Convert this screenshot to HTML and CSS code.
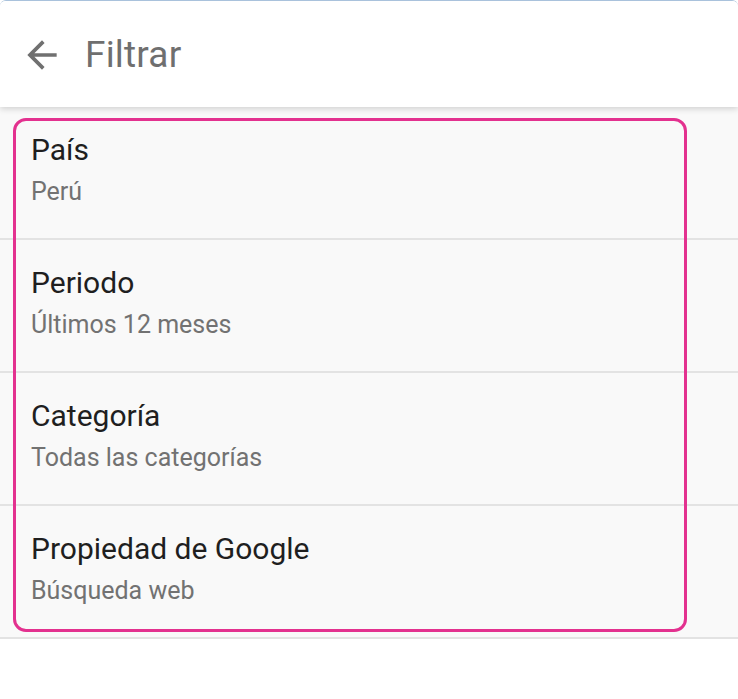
FILE: index.html
```html
<!DOCTYPE html>
<html lang="es">
<head>
<meta charset="utf-8">
<title>Filtrar</title>
<link rel="stylesheet" href="styles.css">
</head>
<body>
<div class="screen">
  <header class="appbar">
    <svg class="back" viewBox="0 0 24 24" aria-hidden="true">
      <path d="M20 11H7.83l5.59-5.59L12 4l-8 8 8 8 1.41-1.41L7.83 13H20v-2z" fill="#707070"/>
    </svg>
    <h1 class="title">Filtrar</h1>
  </header>
  <main class="list">
    <div class="row">
      <div class="row-title">País</div>
      <div class="row-sub">Perú</div>
    </div>
    <div class="row">
      <div class="row-title">Periodo</div>
      <div class="row-sub">Últimos 12 meses</div>
    </div>
    <div class="row">
      <div class="row-title">Categoría</div>
      <div class="row-sub">Todas las categorías</div>
    </div>
    <div class="row">
      <div class="row-title">Propiedad de Google</div>
      <div class="row-sub">Búsqueda web</div>
    </div>
    <div class="highlight"></div>
  </main>
</div>
</body>
</html>
```

FILE: styles.css
```css
* { box-sizing: border-box; }
html, body {
  margin: 0;
  padding: 0;
  background: #ffffff;
  font-family: Roboto, "Noto Sans", Arial, sans-serif;
}
.screen {
  width: 738px;
  height: 699px;
  overflow: hidden;
  background: #ffffff;
  border-top: 1px solid #a9c2dc;
  border-radius: 6px 6px 0 0;
}
.appbar {
  position: relative;
  z-index: 2;
  height: 106px;
  background: #ffffff;
  display: flex;
  align-items: center;
  padding-left: 20px;
  box-shadow: 0 2px 6px rgba(0,0,0,0.16);
}
.back {
  width: 44px;
  height: 44px;
  flex: none;
  margin-top: 2px;
}
.title {
  margin: 0 0 0 21px;
  font-size: 37px;
  font-weight: 400;
  color: #6f6f6f;
  letter-spacing: 0.2px;
}
.list {
  position: relative;
  background: #f9f9f9;
}
.row {
  height: 133px;
  border-bottom: 2px solid #e3e3e3;
  padding: 24px 0 0 31px;
}
.row-title {
  font-size: 30px;
  line-height: 38px;
  color: #1f1f1f;
}
.row-sub {
  margin-top: 7px;
  font-size: 25px;
  line-height: 32px;
  color: #727272;
}
.highlight {
  position: absolute;
  left: 13px;
  top: 11px;
  width: 674px;
  height: 514px;
  border: 3px solid #e3318f;
  border-radius: 13px;
  pointer-events: none;
}
```
